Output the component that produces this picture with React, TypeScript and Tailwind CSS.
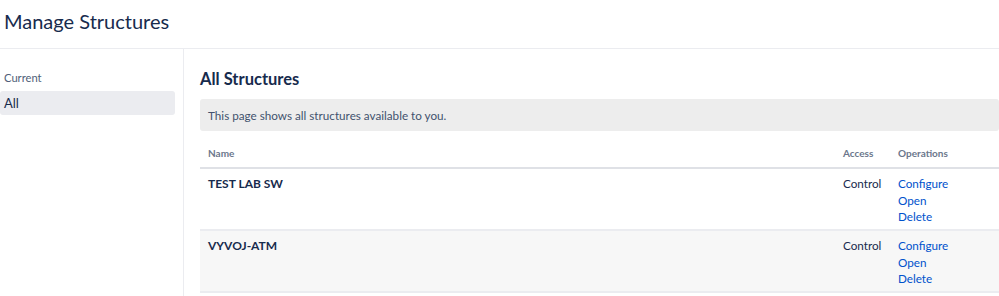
// Manage Structures admin page
const ROWS = [
  { name: 'TEST LAB SW', access: 'Control' },
  { name: 'VYVOJ-ATM', access: 'Control' },
];

const OPS = ['Configure', 'Open', 'Delete'];

export default function App() {
  return (
    <div className="w-[999px] h-[296px] overflow-hidden bg-white text-[#172b4d] font-['Lato','Noto_Sans',sans-serif]">
      {/* page header */}
      <header className="h-[49px] border-b border-[#ebecf0] pl-[4px] pt-[7px]">
        <h1 className="text-[20px] leading-[28px] text-[#172b4d]">Manage Structures</h1>
      </header>

      <div className="flex">
        {/* side nav */}
        <nav className="w-[184px] shrink-0 border-r border-[#ebecf0] h-[247px] pt-[21px] pr-[8px]">
          <div className="pl-[4px] text-[11.2px] leading-[16px] text-[#505f79]">Current</div>
          <div className="mt-[5px] h-[24px] rounded-[3px] bg-[#ebecf0] pl-[4px] text-[13px] leading-[24px] text-[#172b4d]">All</div>
        </nav>

        {/* main content */}
        <main className="flex-1 pl-[16px] pt-[18px]">
          <h2 className="text-[16.5px] leading-[24px] font-bold text-[#172b4d]">All Structures</h2>
          <div className="mt-[8px] h-[32px] rounded-[3px] bg-[#ededed] pl-[8px] text-[11.7px] leading-[32px] text-[#42526e]">
            This page shows all structures available to you.
          </div>

          <table className="mt-[12px] w-full border-collapse text-[11.7px]">
            <thead>
              <tr className="border-b-2 border-[#dfe1e6]">
                <th className="h-[25px] pl-[8px] pb-[6px] text-left align-bottom text-[10px] font-bold text-[#6b778c]">Name</th>
                <th className="w-[55px] pb-[6px] text-left align-bottom text-[10px] font-bold text-[#6b778c]">Access</th>
                <th className="w-[101px] pb-[6px] text-left align-bottom text-[10px] font-bold text-[#6b778c]">Operations</th>
              </tr>
            </thead>
            <tbody>
              {ROWS.map((r, i) => (
                <tr key={r.name} className={`border-b-2 border-[#ebecf0] ${i % 2 ? 'bg-[#f7f7f7]' : 'bg-white'}`}>
                  <td className="h-[62px] pl-[8px] pt-[6px] align-top font-bold text-[12px] text-[#172b4d]">{r.name}</td>
                  <td className="pt-[6px] align-top text-[#172b4d]">{r.access}</td>
                  <td className="pt-[6px] align-top">
                    {OPS.map((op) => (
                      <div key={op} className="leading-[16.5px] text-[#0052cc]">{op}</div>
                    ))}
                  </td>
                </tr>
              ))}
            </tbody>
          </table>
        </main>
      </div>
    </div>
  );
}
